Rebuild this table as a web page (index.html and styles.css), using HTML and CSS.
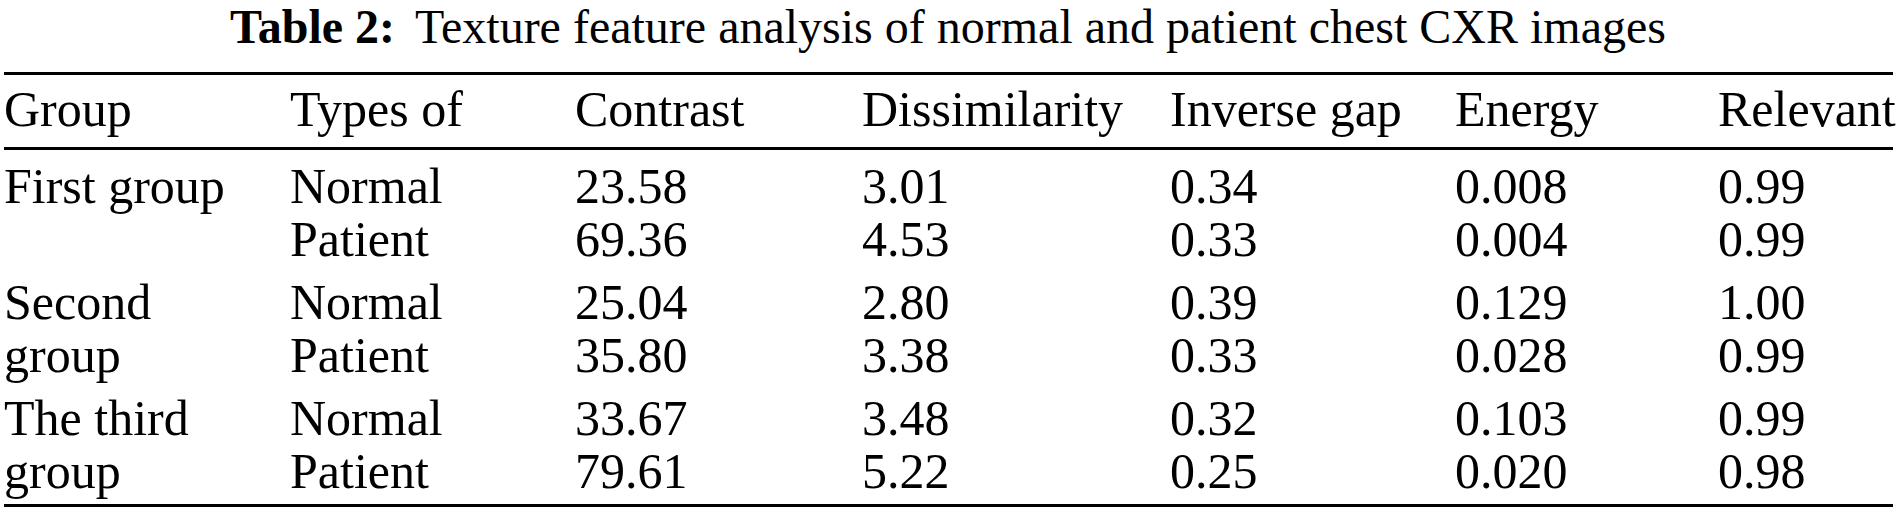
FILE: index.html
```html
<!DOCTYPE html>
<html lang="en">
<head>
<meta charset="utf-8">
<title>Table 2</title>
<link rel="stylesheet" href="styles.css">
</head>
<body>
<div class="page">
  <div class="caption"><span class="cap-label">Table 2:</span><span class="cap-text">Texture feature analysis of normal and patient chest CXR images</span></div>
  <div class="table">
    <div class="row head">
      <div class="cell">Group</div>
      <div class="cell">Types of</div>
      <div class="cell">Contrast</div>
      <div class="cell">Dissimilarity</div>
      <div class="cell">Inverse gap</div>
      <div class="cell">Energy</div>
      <div class="cell">Relevant</div>
    </div>
    <div class="body">
      <div class="row group">
        <div class="cell name">First group</div>
        <div class="cell">Normal</div><div class="cell">23.58</div><div class="cell">3.01</div><div class="cell">0.34</div><div class="cell">0.008</div><div class="cell">0.99</div>
        <div class="cell">Patient</div><div class="cell">69.36</div><div class="cell">4.53</div><div class="cell">0.33</div><div class="cell">0.004</div><div class="cell">0.99</div>
      </div>
      <div class="row group">
        <div class="cell name">Second group</div>
        <div class="cell">Normal</div><div class="cell">25.04</div><div class="cell">2.80</div><div class="cell">0.39</div><div class="cell">0.129</div><div class="cell">1.00</div>
        <div class="cell">Patient</div><div class="cell">35.80</div><div class="cell">3.38</div><div class="cell">0.33</div><div class="cell">0.028</div><div class="cell">0.99</div>
      </div>
      <div class="row group">
        <div class="cell name">The third group</div>
        <div class="cell">Normal</div><div class="cell">33.67</div><div class="cell">3.48</div><div class="cell">0.32</div><div class="cell">0.103</div><div class="cell">0.99</div>
        <div class="cell">Patient</div><div class="cell">79.61</div><div class="cell">5.22</div><div class="cell">0.25</div><div class="cell">0.020</div><div class="cell">0.98</div>
      </div>
    </div>
  </div>
</div>
</body>
</html>
```
FILE: styles.css
```css
html, body {
  margin: 0;
  padding: 0;
  background: #ffffff;
}

.page {
  width: 1896px;
  height: 512px;
  font-family: "Liberation Serif", Tinos, "Times New Roman", Times, "DejaVu Serif", serif;
  color: #000;
}

.caption {
  font-size: 48px;
  line-height: 54px;
  height: 54px;
  text-align: center;
  white-space: nowrap;
}

.cap-label {
  font-weight: bold;
  margin-right: 20px;
}

.table {
  margin: 18px 3px 0 4px;
  border-top: 3px solid #000;
  border-bottom: 3px solid #000;
  font-size: 50px;
  line-height: 53px;
}

.row {
  display: grid;
  grid-template-columns: 286px 285px 287px 308px 285px 263px 1fr;
}

.head {
  padding: 8px 0 11px;
  border-bottom: 3px solid #000;
}

.body {
  padding-bottom: 6px;
}

.group {
  padding-top: 10px;
}

.cell {
  white-space: nowrap;
}

.name {
  grid-row: span 2;
  white-space: normal;
  max-width: 240px;
}
```
